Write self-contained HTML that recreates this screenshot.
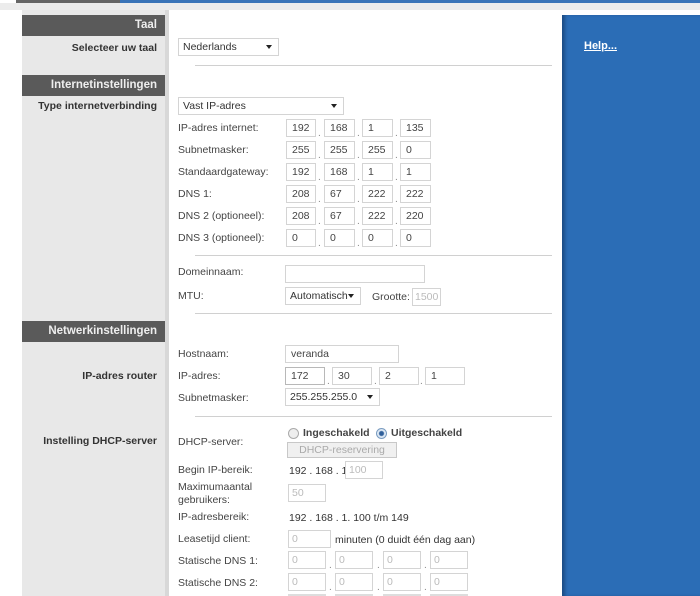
<!DOCTYPE html>
<html style="width:700px;height:596px;overflow:hidden"><head><meta charset="utf-8"><style>
*{margin:0;padding:0;box-sizing:border-box}
body{width:700px;height:596px;overflow:hidden;background:#fff;position:relative;font-family:"Liberation Sans",Arial,sans-serif;font-size:10.5px;color:#333}
.a{position:absolute}
.h{position:absolute;left:22px;width:143px;height:21px;background:#5a5a5a;color:#eee;font-weight:bold;font-size:11.5px;text-align:right;padding-right:8px;line-height:21px}
.ll{position:absolute;left:22px;width:135px;text-align:right;font-weight:bold;font-size:10.5px;color:#333;line-height:14px}
.l{position:absolute;left:178px;line-height:13px;color:#444}
.i{position:absolute;height:18px;border:1px solid #d4d4d4;background:#fff;padding-left:5px;line-height:16px;color:#444;overflow:hidden}
.d{color:#bbb}
.dot{position:absolute;color:#888;font-size:10px}
.s{position:absolute;height:18px;border:1px solid #d4d4d4;background:#fff;padding-left:4px;line-height:16px;color:#333}
.s:after{content:"";position:absolute;right:6px;top:6px;border-left:3.5px solid transparent;border-right:3.5px solid transparent;border-top:4px solid #222}
.hr{position:absolute;left:195px;width:357px;height:1px;background:#d0d0d0}
</style></head><body>
<div class="a" style="left:16px;top:0;width:104px;height:3px;background:#666"></div>
<div class="a" style="left:120px;top:0;width:580px;height:3px;background:#3a74b8"></div>
<div class="a" style="left:0;top:3px;width:700px;height:7px;background:#ececec"></div>
<div class="a" style="left:22px;top:10px;width:143px;height:586px;background:#e8e8e8"></div>
<div class="a" style="left:165px;top:10px;width:4px;height:586px;background:#d8d8d8"></div>
<div class="a" style="left:562px;top:15px;width:138px;height:581px;background:#2b6db6;box-shadow:inset 4px 0 3px -1px #1d4d86"></div>
<div class="a" style="left:584px;top:40px;color:#fff;font-weight:bold;text-decoration:underline;font-size:11px">Help...</div>

<div class="h" style="top:15px">Taal</div>
<div class="h" style="top:75px">Internetinstellingen</div>
<div class="h" style="top:321px">Netwerkinstellingen</div>
<div class="ll" style="top:41px">Selecteer uw taal</div>
<div class="ll" style="top:99px">Type internetverbinding</div>
<div class="ll" style="top:369px">IP-adres router</div>
<div class="ll" style="top:434px">Instelling DHCP-server</div>

<div class="s" style="left:178px;top:38px;width:101px">Nederlands</div>
<div class="hr" style="top:65px"></div>
<div class="s" style="left:178px;top:97px;width:166px">Vast IP-adres</div>

<div class="l" style="top:122px">IP-adres internet:</div>
<div class="l" style="top:144px">Subnetmasker:</div>
<div class="l" style="top:166px">Standaardgateway:</div>
<div class="l" style="top:188px">DNS 1:</div>
<div class="l" style="top:210px">DNS 2 (optioneel):</div>
<div class="l" style="top:232px">DNS 3 (optioneel):</div>

<div class="i" style="left:286px;top:119px;width:30px">192</div><div class="i" style="left:324px;top:119px;width:31px">168</div><div class="i" style="left:362px;top:119px;width:31px">1</div><div class="i" style="left:400px;top:119px;width:31px">135</div>
<div class="i" style="left:286px;top:141px;width:30px">255</div><div class="i" style="left:324px;top:141px;width:31px">255</div><div class="i" style="left:362px;top:141px;width:31px">255</div><div class="i" style="left:400px;top:141px;width:31px">0</div>
<div class="i" style="left:286px;top:163px;width:30px">192</div><div class="i" style="left:324px;top:163px;width:31px">168</div><div class="i" style="left:362px;top:163px;width:31px">1</div><div class="i" style="left:400px;top:163px;width:31px">1</div>
<div class="i" style="left:286px;top:185px;width:30px">208</div><div class="i" style="left:324px;top:185px;width:31px">67</div><div class="i" style="left:362px;top:185px;width:31px">222</div><div class="i" style="left:400px;top:185px;width:31px">222</div>
<div class="i" style="left:286px;top:207px;width:30px">208</div><div class="i" style="left:324px;top:207px;width:31px">67</div><div class="i" style="left:362px;top:207px;width:31px">222</div><div class="i" style="left:400px;top:207px;width:31px">220</div>
<div class="i" style="left:286px;top:229px;width:30px">0</div><div class="i" style="left:324px;top:229px;width:31px">0</div><div class="i" style="left:362px;top:229px;width:31px">0</div><div class="i" style="left:400px;top:229px;width:31px">0</div>

<div class="hr" style="top:255px"></div>
<div class="l" style="top:266px">Domeinnaam:</div>
<div class="i" style="left:285px;top:265px;width:140px"></div>
<div class="l" style="top:290px">MTU:</div>
<div class="s" style="left:285px;top:287px;width:76px">Automatisch</div>
<div class="a" style="left:372px;top:291px;color:#444">Grootte:</div>
<div class="i d" style="left:412px;top:288px;width:29px;padding-left:2px">1500</div>
<div class="hr" style="top:313px"></div>

<div class="l" style="top:348px">Hostnaam:</div>
<div class="i" style="left:285px;top:345px;width:114px">veranda</div>
<div class="l" style="top:370px">IP-adres:</div>
<div class="i" style="left:285px;top:367px;width:40px;border-color:#b8b8b8">172</div><div class="i" style="left:332px;top:367px;width:40px">30</div><div class="i" style="left:379px;top:367px;width:40px">2</div><div class="i" style="left:425px;top:367px;width:40px">1</div>
<div class="l" style="top:392px">Subnetmasker:</div>
<div class="s" style="left:285px;top:388px;width:95px">255.255.255.0</div>
<div class="hr" style="top:416px"></div>

<div class="a" style="left:288px;top:428px;width:11px;height:11px;border-radius:50%;border:1px solid #aaa;background:#eee"></div>
<div class="a" style="left:303px;top:427px;font-weight:bold;color:#444">Ingeschakeld</div>
<div class="a" style="left:376px;top:428px;width:11px;height:11px;border-radius:50%;border:1px solid #7a9cc0;background:radial-gradient(circle,#2f5f9a 0 2px,#dde8f4 3px)"></div>
<div class="a" style="left:391px;top:427px;font-weight:bold;color:#444">Uitgeschakeld</div>
<div class="l" style="top:436px">DHCP-server:</div>
<div class="a" style="left:287px;top:442px;width:110px;height:16px;border:1px solid #c8c8c8;background:#f0f0f0;color:#aaa;text-align:center;line-height:14px">DHCP-reservering</div>

<div class="l" style="top:464px">Begin IP-bereik:</div>
<div class="a" style="left:289px;top:465px">192 . 168 . 1.</div>
<div class="i d" style="left:345px;top:461px;width:38px;padding-left:3px">100</div>
<div class="l" style="top:481px">Maximumaantal<br>gebruikers:</div>
<div class="i d" style="left:288px;top:484px;width:38px;padding-left:3px">50</div>
<div class="l" style="top:511px">IP-adresbereik:</div>
<div class="a" style="left:289px;top:512px">192 . 168 . 1. 100 t/m 149</div>
<div class="l" style="top:533px">Leasetijd client:</div>
<div class="i d" style="left:288px;top:530px;width:43px;padding-left:3px">0</div>
<div class="a" style="left:335px;top:534px">minuten (0 duidt één dag aan)</div>
<div class="l" style="top:555px">Statische DNS 1:</div>
<div class="i d" style="left:288px;top:551px;width:38px;padding-left:3px">0</div><div class="i d" style="left:335px;top:551px;width:38px;padding-left:3px">0</div><div class="i d" style="left:383px;top:551px;width:38px;padding-left:3px">0</div><div class="i d" style="left:430px;top:551px;width:38px;padding-left:3px">0</div>
<div class="l" style="top:577px">Statische DNS 2:</div>
<div class="i d" style="left:288px;top:573px;width:38px;padding-left:3px">0</div><div class="i d" style="left:335px;top:573px;width:38px;padding-left:3px">0</div><div class="i d" style="left:383px;top:573px;width:38px;padding-left:3px">0</div><div class="i d" style="left:430px;top:573px;width:38px;padding-left:3px">0</div>
<div class="a" style="left:288px;top:594px;width:38px;height:2px;background:#ddd"></div><div class="a" style="left:335px;top:594px;width:38px;height:2px;background:#ddd"></div><div class="a" style="left:383px;top:594px;width:38px;height:2px;background:#ddd"></div><div class="a" style="left:430px;top:594px;width:38px;height:2px;background:#ddd"></div>

<div class="dot" style="left:318px;top:128px">.</div><div class="dot" style="left:357px;top:128px">.</div><div class="dot" style="left:395px;top:128px">.</div>
<div class="dot" style="left:318px;top:150px">.</div><div class="dot" style="left:357px;top:150px">.</div><div class="dot" style="left:395px;top:150px">.</div>
<div class="dot" style="left:318px;top:172px">.</div><div class="dot" style="left:357px;top:172px">.</div><div class="dot" style="left:395px;top:172px">.</div>
<div class="dot" style="left:318px;top:194px">.</div><div class="dot" style="left:357px;top:194px">.</div><div class="dot" style="left:395px;top:194px">.</div>
<div class="dot" style="left:318px;top:216px">.</div><div class="dot" style="left:357px;top:216px">.</div><div class="dot" style="left:395px;top:216px">.</div>
<div class="dot" style="left:318px;top:238px">.</div><div class="dot" style="left:357px;top:238px">.</div><div class="dot" style="left:395px;top:238px">.</div>
<div class="dot" style="left:327px;top:376px">.</div><div class="dot" style="left:374px;top:376px">.</div><div class="dot" style="left:420px;top:376px">.</div>
<div class="dot" style="left:329px;top:560px">.</div><div class="dot" style="left:377px;top:560px">.</div><div class="dot" style="left:424px;top:560px">.</div>
<div class="dot" style="left:329px;top:582px">.</div><div class="dot" style="left:377px;top:582px">.</div><div class="dot" style="left:424px;top:582px">.</div>
</body></html>
